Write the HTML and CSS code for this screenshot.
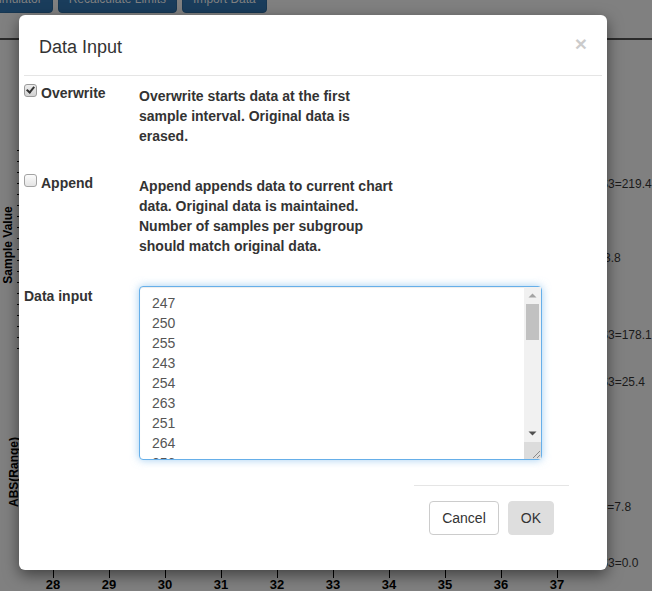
FILE: index.html
```html
<!DOCTYPE html>
<html lang="en">
<head>
<meta charset="utf-8">
<title>Data Input</title>
<link rel="stylesheet" href="styles.css">
</head>
<body>
<div class="page">
  <div class="toolbar">
    <button class="tb-btn">Simulator</button>
    <button class="tb-btn">Recalculate Limits</button>
    <button class="tb-btn">Import Data</button>
  </div>
  <div class="rule"></div>
  <div class="chart">
    <span class="ylabel ylabel-sample">Sample Value</span>
    <span class="ylabel ylabel-range">ABS(Range)</span>
    <div class="yticks"></div>
    <span class="rlabel r1">S3=219.4</span>
    <span class="rlabel r2">3.8</span>
    <span class="rlabel r3">S3=178.1</span>
    <span class="rlabel r4">S3=25.4</span>
    <span class="rlabel r5">Range=7.8</span>
    <span class="rlabel r6">S3=0.0</span>
    <div class="xaxis">
      <div class="xtick"><span class="tick"></span><span class="xlab">28</span></div>
      <div class="xtick"><span class="tick"></span><span class="xlab">29</span></div>
      <div class="xtick"><span class="tick"></span><span class="xlab">30</span></div>
      <div class="xtick"><span class="tick"></span><span class="xlab">31</span></div>
      <div class="xtick"><span class="tick"></span><span class="xlab">32</span></div>
      <div class="xtick"><span class="tick"></span><span class="xlab">33</span></div>
      <div class="xtick"><span class="tick"></span><span class="xlab">34</span></div>
      <div class="xtick"><span class="tick"></span><span class="xlab">35</span></div>
      <div class="xtick"><span class="tick"></span><span class="xlab">36</span></div>
      <div class="xtick"><span class="tick"></span><span class="xlab">37</span></div>
    </div>
  </div>
</div>

<div class="dialog-layer">
  <div class="dialog">
    <div class="dialog-header">
      <h4 class="dialog-title">Data Input</h4>
      <button class="close" type="button">×</button>
    </div>
    <div class="dialog-body">
      <div class="field">
        <label class="opt-label"><input type="checkbox" class="cb" checked>Overwrite</label>
        <p class="desc">Overwrite starts data at the first sample interval. Original data is erased.</p>
      </div>
      <div class="field">
        <label class="opt-label"><input type="checkbox" class="cb">Append</label>
        <p class="desc">Append appends data to current chart data. Original data is maintained. Number of samples per subgroup should match original data.</p>
      </div>
      <div class="field field-data">
        <label class="data-label" for="data">Data input</label>
        <div class="ta-wrap">
          <textarea id="data" class="data-input">247
250
255
243
254
263
251
264
256
248
252
259
245
257
249
261
253
246
258
250
244
262
255
251
247
260
252
249</textarea>
          <div class="fake-scroll" aria-hidden="true">
            <div class="sb-btn"><svg width="17" height="17" viewBox="0 0 17 17"><polygon points="4.5,10.5 8.5,6.5 12.5,10.5" fill="#a3a3a3"/></svg></div>
            <div class="sb-track"><div class="sb-thumb"></div></div>
            <div class="sb-btn"><svg width="17" height="17" viewBox="0 0 17 17"><polygon points="4.5,6.5 8.5,10.5 12.5,6.5" fill="#505050"/></svg></div>
            <div class="sb-corner"><svg width="17" height="17" viewBox="0 0 17 17"><path d="M16 9 L9 16 M16 13 L13 16" stroke="#8a8a8a" stroke-width="1" fill="none"/></svg></div>
          </div>
        </div>
      </div>
    </div>
    <div class="dialog-footer">
      <button class="btn" type="button">Cancel</button>
      <button class="btn btn-ok" type="button">OK</button>
    </div>
  </div>
</div>
</body>
</html>
```
FILE: styles.css
```css
/* The page behind the dialog is shown already dimmed (as under a 50% black backdrop). */
html, body {
  margin: 0;
  padding: 0;
  background: #808080;
  overflow: hidden;
  font-family: "Liberation Sans", Arial, sans-serif;
}

.page {
  position: relative;
  width: 652px;
  height: 591px;
  overflow: hidden;
  background: #808080;
}

/* background page */
.toolbar {
  display: flex;
  margin: -17px 0 0 -20px;
}
.tb-btn {
  font-family: "Liberation Sans", Arial, sans-serif;
  font-size: 12px;
  line-height: 18px;
  padding: 6px 10px 4px;
  margin-right: 5px;
  color: #808080;
  background: #1a3d5c;
  border: 1px solid #173752;
  border-radius: 4px;
}
.rule {
  margin-top: 25px;
  border-top: 2px solid #2b2b2b;
}
.chart {
  position: relative;
  height: 551px;
}
.ylabel {
  position: absolute;
  width: 90px;
  text-align: center;
  font-size: 12px;
  line-height: 14px;
  font-weight: 700;
  color: #000;
  transform: rotate(-90deg);
}
.ylabel-sample { left: -37px; top: 198px; }
.ylabel-range { left: -31px; top: 425px; }
.yticks {
  position: absolute;
  left: 17px;
  top: 110px;
  width: 2px;
  height: 200px;
  background: repeating-linear-gradient(to bottom, #000 0, #000 1px, transparent 1px, transparent 11px);
}
.rlabel {
  position: absolute;
  left: 600px;
  font-size: 12px;
  line-height: 14px;
  color: #1a1a1a;
  white-space: nowrap;
}
.r1 { top: 137px; }
.r2 { top: 211px; left: 604px; }
.r3 { top: 288px; }
.r4 { top: 335px; }
.r5 { top: 460px; left: 572px; }
.r6 { top: 516px; }
.xaxis {
  position: absolute;
  left: 25px;
  top: 530px;
  display: flex;
}
.xtick {
  width: 56px;
  display: flex;
  flex-direction: column;
  align-items: center;
}
.tick {
  display: block;
  width: 1px;
  height: 8px;
  background: #000;
}
.xlab {
  display: block;
  font-size: 13px;
  line-height: 14px;
  font-weight: 700;
  color: #000;
}

/* layer that holds the dialog, over the page */
.dialog-layer {
  position: absolute;
  top: 15px;
  left: 19px;
}
.dialog {
  width: 588px;
  background: #fff;
  border-radius: 6px;
  box-shadow: 0 5px 15px rgba(0, 0, 0, 0.5);
  padding-bottom: 20px;
  color: #333;
}
.dialog-header {
  margin: 0 5px;
  display: flex;
  justify-content: space-between;
  align-items: flex-start;
  padding: 22px 15px 18px;
  border-bottom: 1px solid #e5e5e5;
}
.dialog-title {
  margin: 0;
  font-size: 18px;
  line-height: 20px;
  font-weight: 400;
  color: #333;
}
.close {
  margin-top: -4px;
  padding: 0;
  border: 0;
  background: none;
  font-family: "Liberation Sans", Arial, sans-serif;
  font-size: 21px;
  line-height: 21px;
  font-weight: 700;
  color: #000;
  opacity: 0.2;
}

.dialog-body {
  margin: 0 5px;
  padding-top: 7px;
}
.field {
  display: grid;
  grid-template-columns: 115px 1fr;
  align-items: start;
}
.field + .field {
  margin-top: 27px;
}
.field.field-data {
  margin-top: 30px;
}
.opt-label,
.data-label {
  display: flex;
  align-items: flex-start;
  font-size: 14px;
  line-height: 20px;
  font-weight: 700;
  color: #333;
}
.desc {
  margin: 3px 0 0;
  max-width: 258px;
  font-size: 14px;
  line-height: 20px;
  font-weight: 700;
  color: #333;
}

.cb {
  appearance: none;
  -webkit-appearance: none;
  position: relative;
  width: 13px;
  height: 13px;
  margin: 1px 4px 0 0;
  border: 1px solid #a3a3a3;
  border-radius: 3px;
  background: linear-gradient(#fbfbfb, #e4e4e4);
  flex: none;
}
.cb:checked {
  background: linear-gradient(#ececec, #d2d2d2);
  border-color: #9a9a9a;
}
.cb:checked::after {
  content: "";
  position: absolute;
  left: 3px;
  top: 0px;
  width: 3px;
  height: 6px;
  border-right: 2px solid #333;
  border-bottom: 2px solid #333;
  transform: rotate(40deg);
}

.ta-wrap {
  position: relative;
  width: 403px;
  height: 174px;
}
.data-input {
  display: block;
  box-sizing: border-box;
  width: 403px;
  height: 174px;
  margin: 0;
  padding: 6px 29px 6px 12px;
  font-family: "Liberation Sans", Arial, sans-serif;
  font-size: 14px;
  line-height: 20px;
  color: #555;
  background: #fff;
  border: 1px solid #66afe9;
  border-radius: 4px;
  box-shadow: inset 0 1px 1px rgba(0, 0, 0, 0.075), 0 0 8px rgba(102, 175, 233, 0.6);
  outline: none;
  overflow: hidden;
  resize: none;
}
.fake-scroll {
  position: absolute;
  top: 1px;
  right: 1px;
  bottom: 1px;
  width: 17px;
  display: flex;
  flex-direction: column;
  background: #f1f1f1;
}
.sb-btn {
  height: 17px;
  flex: none;
}
.sb-btn svg,
.sb-corner svg {
  display: block;
}
.sb-track {
  flex: 1;
}
.sb-thumb {
  height: 36px;
  margin: 0 2px;
  background: #c1c1c1;
}
.sb-corner {
  height: 17px;
  flex: none;
  background: #dcdcdc;
  border-bottom-right-radius: 3px;
}

.dialog-footer {
  display: flex;
  width: fit-content;
  margin: 25px 38px 0 auto;
  padding: 15px;
  border-top: 1px solid #e5e5e5;
}
.btn {
  font-family: "Liberation Sans", Arial, sans-serif;
  font-size: 14px;
  line-height: 20px;
  padding: 6px 12px;
  color: #333;
  background: #fff;
  border: 1px solid #ccc;
  border-radius: 4px;
}
.btn + .btn {
  margin-left: 9px;
}
.btn-ok {
  background: #dedede;
  border-color: #dedede;
}
```
